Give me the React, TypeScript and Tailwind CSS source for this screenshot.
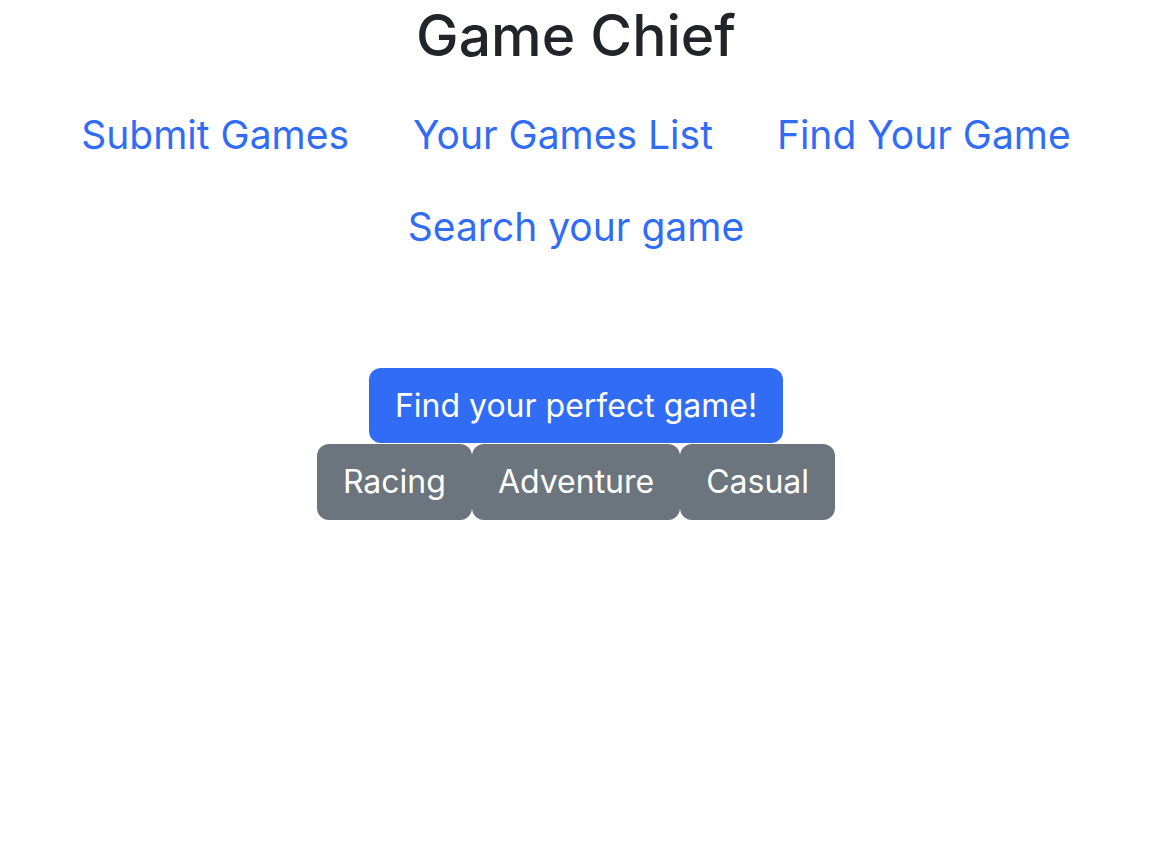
const links = ["Submit Games", "Your Games List", "Find Your Game"];
const genres = ["Racing", "Adventure", "Casual"];

export default function App() {
  return (
    <div
      className="w-[1152px] min-h-[842px] bg-white flex flex-col items-center text-[#212529]"
      style={{ fontFamily: "Inter, 'Noto Sans', sans-serif" }}
    >
      <h1 className="text-[57px] font-medium leading-[70px] mt-[1px]">Game Chief</h1>

      <nav className="flex flex-col items-center mt-[18px]">
        <div className="flex">
          {links.map((l) => (
            <a key={l} href="#" className="px-[32px] py-[23px] text-[39px] leading-[46px] text-[#316cf4]">
              {l}
            </a>
          ))}
        </div>
        <a href="#" className="px-[33px] py-[23px] text-[39px] leading-[46px] text-[#316cf4]">
          Search your game
        </a>
      </nav>

      <button className="mt-[95px] h-[75px] px-[26px] rounded-[12px] bg-[#316cf4] text-white text-[32px]">
        Find your perfect game!
      </button>
      <div className="flex mt-[1px]">
        {genres.map((g) => (
          <button
            key={g}
            className="h-[76px] px-[26px] rounded-[12px] bg-[#6c757d] text-white text-[32px]"
          >
            {g}
          </button>
        ))}
      </div>
    </div>
  );
}
